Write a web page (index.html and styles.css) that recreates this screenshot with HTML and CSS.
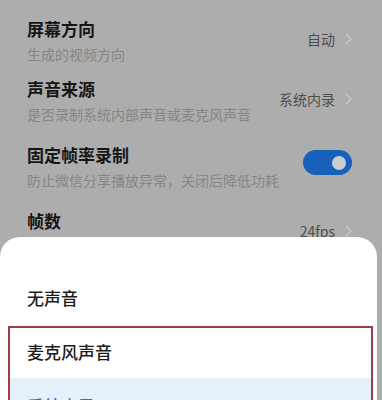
FILE: index.html
```html
<!DOCTYPE html>
<html lang="zh-CN">
<head>
  <meta charset="UTF-8">
  <meta name="viewport" content="width=device-width, initial-scale=1.0">
  <title>录屏设置</title>
  <link rel="stylesheet" href="styles.css">
</head>
<body>
  <!-- settings list, dimmed behind the sheet -->
  <div class="settings">
    <div class="row">
      <div class="row-text">
        <div class="row-title">屏幕方向</div>
        <div class="row-desc">生成的视频方向</div>
      </div>
      <div class="row-value">自动
        <svg class="chevron" width="7" height="12" viewBox="0 0 7 12"><polyline points="1,1 6,6 1,11" fill="none" stroke="#c9c9c9" stroke-width="1.3"/></svg>
      </div>
    </div>

    <div class="row">
      <div class="row-text">
        <div class="row-title">声音来源</div>
        <div class="row-desc">是否录制系统内部声音或麦克风声音</div>
      </div>
      <div class="row-value">系统内录
        <svg class="chevron" width="7" height="12" viewBox="0 0 7 12"><polyline points="1,1 6,6 1,11" fill="none" stroke="#c9c9c9" stroke-width="1.3"/></svg>
      </div>
    </div>

    <div class="row row-tall">
      <div class="row-text">
        <div class="row-title">固定帧率录制</div>
        <div class="row-desc">防止微信分享播放异常，关闭后降低功耗</div>
      </div>
      <div class="switch"><span class="knob"></span></div>
    </div>

    <div class="row">
      <div class="row-text">
        <div class="row-title">帧数</div>
        <div class="row-desc">录制视频的帧率</div>
      </div>
      <div class="row-value">24fps
        <svg class="chevron" width="7" height="12" viewBox="0 0 7 12"><polyline points="1,1 6,6 1,11" fill="none" stroke="#c9c9c9" stroke-width="1.3"/></svg>
      </div>
    </div>
  </div>

  <!-- bottom sheet -->
  <div class="sheet">
    <div class="option option-first">无声音</div>
    <div class="marked">
      <div class="option option-mic">麦克风声音</div>
      <div class="option selected">系统内录</div>
    </div>
  </div>
</body>
</html>
```

FILE: styles.css
```css
body {
  margin: 0;
  height: 400px;
  overflow: hidden;
  background-color: #adadad; /* dimmed page behind the sheet */
  font-family: "Noto Sans CJK SC", "Noto Sans", sans-serif;
}
.settings {
  height: 237px;
  overflow: hidden;
  padding: 10px 30px 0 27px;
  box-sizing: border-box;
}
.row {
  display: flex;
  align-items: center;
  justify-content: space-between;
  padding: 8px 0 7px;
}
.row-tall {
  padding: 14px 0 13px; /* toggle row is a little taller */
}
.row-title {
  font-size: 17px;
  line-height: 22px;
  font-weight: 600;
  color: #161616;
}
.row-desc {
  font-size: 14px;
  line-height: 18px;
  margin-top: 5px;
  color: #868686;
  white-space: nowrap;
}
.row-value {
  display: flex;
  align-items: center;
  font-size: 14px;
  color: #4d4d4d;
  white-space: nowrap;
  margin-bottom: 4px;
}
.chevron {
  margin-left: 10px;
}
.switch {
  width: 49px;
  height: 25px;
  border-radius: 13px;
  background-color: #1761bb;
  display: flex;
  align-items: center;
  justify-content: flex-end;
  padding-right: 6px;
  box-sizing: border-box;
  flex-shrink: 0;
  margin-top: -8px;
}
.knob {
  width: 14px;
  height: 14px;
  border-radius: 50%;
  background-color: #c9ccd1;
}
.sheet {
  width: 377px;
  background-color: #fff;
  border-radius: 20px 20px 0 0;
  padding-top: 32px;
  height: 163px;
  overflow: hidden;
  box-sizing: border-box;
}
.option {
  height: 55px;
  display: flex;
  align-items: center;
  padding-left: 27px;
  font-size: 17px;
  font-weight: 500;
  color: #1c1c1c;
}
.option-first {
  height: 57px;
}
.option-mic {
  height: 50px;
  padding-left: 17px;
  padding-bottom: 3px;
  box-sizing: border-box;
}
.selected {
  padding-left: 17px;
  background-color: #e5f0fb;
  color: #2a74d4;
}
/* red annotation box round the lower options */
.marked {
  margin: 0 4px 0 8px;
  border: 2px solid #9e3d4a;
  border-bottom: none;
}
```
